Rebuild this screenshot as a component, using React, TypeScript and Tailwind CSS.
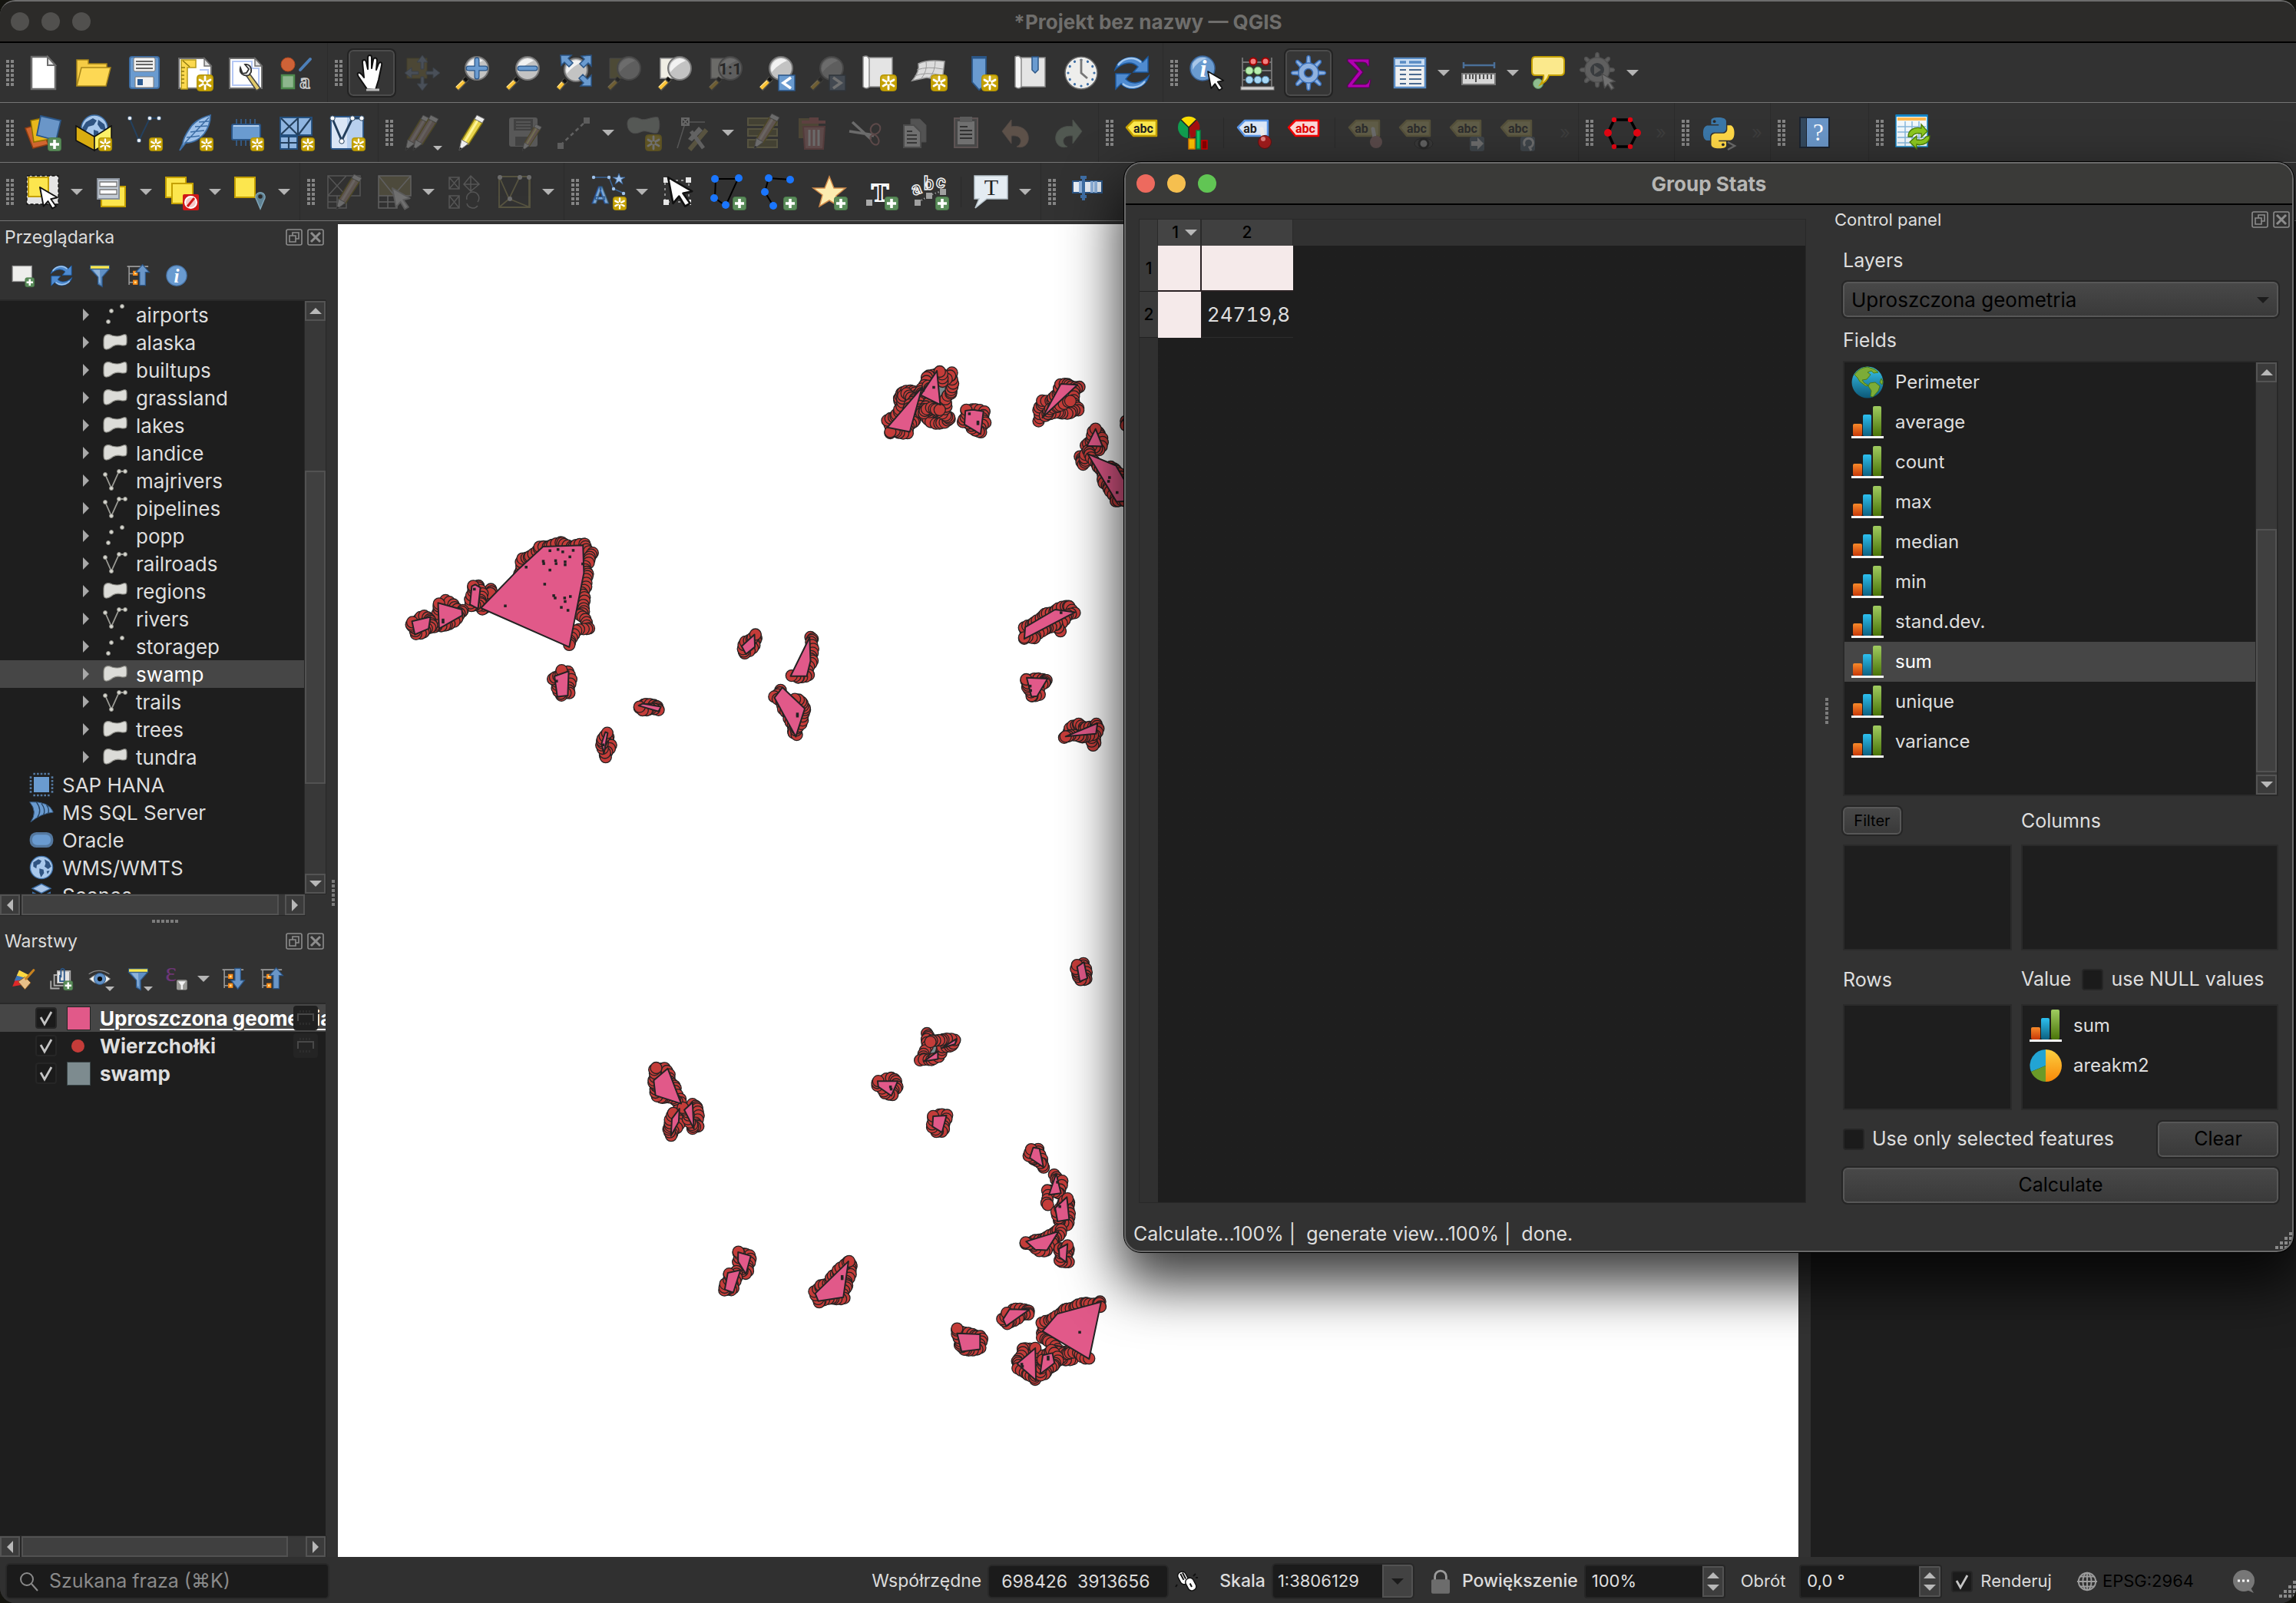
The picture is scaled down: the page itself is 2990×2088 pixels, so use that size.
import type { ReactNode } from "react";

/* ---------------------------------------------------------------- helpers */

function Ico({ children, dim, className = "size-12" }: { children: ReactNode; dim?: boolean; className?: string }) {
  return (
    <svg viewBox="0 0 48 48" aria-hidden="true" className={`${className} shrink-0 overflow-visible ${dim ? "opacity-30" : ""}`}>
      {children}
    </svg>
  );
}

/* Yellow "new" badge */
function NewBadge({ s = 22 }: { s?: number }) {
  return (
    <g transform={`translate(${48 - s} ${48 - s}) scale(${s / 22})`}>
      <rect x="0.5" y="0.5" width="21" height="21" rx="4" fill="#c4a000" stroke="#b29300" />
      <rect x="2" y="2" width="18" height="8" rx="3" fill="#d9b92e" opacity=".6" />
      <path d="M11 3v16M4 7l14 8M4 15l14-8" stroke="#fff" strokeWidth="2.8" strokeLinecap="round" />
      <circle cx="11" cy="11" r="2" fill="#c4a000" />
    </g>
  );
}

function PlusBadge({ s = 18 }: { s?: number }) {
  return (
    <g transform={`translate(${48 - s} ${48 - s}) scale(${s / 18})`}>
      <rect x="0.5" y="0.5" width="17" height="17" rx="3" fill="#5a8c5a" stroke="#4a7a4a" />
      <path d="M9 3v12M3 9h12" stroke="#fff" strokeWidth="3.6" />
    </g>
  );
}

function Lens({ cx = 29, cy = 18, r = 15, handle = "#fcc436" }: { cx?: number; cy?: number; r?: number; handle?: string }) {
  return (
    <>
      <path d={`M${cx - 13} ${cy + 13}L3 45`} stroke="#55534a" strokeWidth="7" />
      <path d={`M${cx - 13} ${cy + 13}l-3 3`} stroke="#111" strokeWidth="5" />
      <path d={`M${cx - 17} ${cy + 17}L3 44`} stroke={handle} strokeWidth="5" />
      <path d={`M${cx - 18} ${cy + 16}L2 42`} stroke="#fff3c8" strokeWidth="1" />
      <circle cx={cx} cy={cy} r={r} fill="#c3c3c3" stroke="#777" strokeWidth="2" />
      <path d={`M${cx - 12} ${cy + 5}A13 13 0 0 1 ${cx + 8} ${cy - 10}Q${cx - 4} ${cy - 5} ${cx - 12} ${cy + 5}z`} fill="#f2f2f2" />
    </>
  );
}

function Cursor({ x, y, s = 1, fill = "#fff", stroke = "#111" }: { x: number; y: number; s?: number; fill?: string; stroke?: string }) {
  return (
    <path
      transform={`translate(${x} ${y}) scale(${s})`}
      d="M0 0L24 14L15 16L22 26L17 29L11 19L5 26z"
      fill={fill}
      stroke={stroke}
      strokeWidth="2"
      strokeLinejoin="round"
    />
  );
}

function Tag({ text, fill, stroke, ink }: { text: string; fill: string; stroke: string; ink: string }) {
  return (
    <>
      <path d="M3 17L12 8h30v20H12z" fill={fill} stroke={stroke} strokeWidth="2.5" strokeLinejoin="round" />
      <text x={text === "ab" ? 19 : 25} y="24" fontSize="16" fontWeight="700" fontFamily="Roboto, sans-serif" textAnchor="middle" fill={ink}>
        {text}
      </text>
    </>
  );
}

function Refresh() {
  return (
    <>
      <path d="M2 20C6 4 28 -2 38 10l7-7v20H26l6-7C24 8 12 10 2 20z" fill="#4f8bd0" stroke="#1d5a9f" strokeWidth="1.5" />
      <path d="M46 28C42 44 20 50 10 38l-7 7V25h19l-6 7c8 8 20 6 30-4z" fill="#4f8bd0" stroke="#1d5a9f" strokeWidth="1.5" />
      <path d="M6 14C12 5 26 1 36 10M41 35c-6 8-20 11-29 3" fill="none" stroke="#a4c8ee" strokeWidth="2.5" />
    </>
  );
}

function Pencil({ x = 0, fill = "#e8d44c", light = "#fff59a" }: { x?: number; fill?: string; light?: string }) {
  return (
    <g transform={`translate(${x} 0)`}>
      <path d="M26 6l10 5L18 39l-9-5z" fill={fill} stroke="#8a7a10" strokeWidth="1.5" />
      <path d="M30 8L13 36" stroke={light} strokeWidth="3" />
      <path d="M26 6l3-5 10 5-3 5z" fill="#eee" stroke="#777" />
      <path d="M9 33l9 5-12 9z" fill="#eee" stroke="#777" />
      <path d="M7 43l3 1-4 3z" fill="#222" />
    </g>
  );
}

function Gear({ fill, stroke, inner, r = 13 }: { fill: string; stroke: string; inner: string; r?: number }) {
  return (
    <>
      {[0, 45, 90, 135, 180, 225, 270, 315].map((a) => (
        <path key={a} transform={`rotate(${a} 24 24)`} d="M21 14L22 3Q24 0 26 3L27 14z" fill={fill} stroke={stroke} strokeWidth="1.5" />
      ))}
      <circle cx="24" cy="24" r={r} fill={fill} stroke={stroke} strokeWidth="1.5" />
      <circle cx="24" cy="24" r={r - 4} fill={fill} />
      <circle cx="24" cy="24" r="5.5" fill={inner} stroke={stroke} strokeWidth="1.5" />
    </>
  );
}

function Page({ inner = true }: { inner?: boolean }) {
  return (
    <>
      <path d="M3 5h33l9 10v29H3z" fill="#fff" stroke="#6d6d6d" strokeWidth="2" />
      {inner && <path d="M7 9h25v9h9v22H7z" fill="none" stroke="#b5c8f5" strokeWidth="2" />}
      <path d="M36 5v10h9z" fill="#ddd" stroke="#6d6d6d" strokeWidth="1.5" />
    </>
  );
}

function Expand({ up }: { up?: boolean }) {
  return (
    <>
      <path d="M1 5h44M5 5v38M5 20h8M5 38h8" stroke="#9a9a9a" strokeWidth="2.5" fill="none" />
      <rect x="13" y="14" width="10" height="10" fill="#ff8c1a" />
      <rect x="13" y="33" width="10" height="10" fill="#ff8c1a" />
      <rect x="16" y="17" width="4" height="4" fill="#ffe08a" />
      <rect x="16" y="36" width="4" height="4" fill="#ffe08a" />
      <path d={up ? "M33 1L47 17h-8v27H27V17h-8z" : "M27 2h12v25h8L33 45L19 27h8z"} fill="#6a96c8" stroke="#2b5687" strokeWidth="2" />
    </>
  );
}

function Funnel() {
  return (
    <>
      <path d="M4 10h40L29 27v20l-9-5V27z" fill="#5f8fc4" stroke="#2b5687" strokeWidth="2" />
      <path d="M10 12h14l1 28-3-2V27z" fill="#a3c2e4" opacity=".7" />
      <rect x="4" y="3" width="40" height="7" fill="#fce94f" stroke="#2b5687" strokeWidth="1.5" />
    </>
  );
}

function GlobeMini() {
  return (
    <>
      <circle cx="24" cy="24" r="22" fill="#a8c8ec" stroke="#3d6ea5" strokeWidth="2" />
      <path d="M8 14l10-6 6 3-3 6-6 2-1 7-6-4zM20 26l8 2 1 7-6 8-3-9zM30 8l9 5 4 9-6 5-7-5 2-6zM34 31l6-1-4 7z" fill="#2f5482" />
    </>
  );
}

/* ------------------------------------------------------------- icon table */

const ZOOM_BOX = <path d="M4 5h26v26H4z" fill="#f0eee4" stroke="#999" strokeWidth="1.5" />;

const ICONS: Record<string, ReactNode> = {
  new: (
    <>
      <path d="M9 3h21l10 11v31H9z" fill="#fff" stroke="#6d6d6d" strokeWidth="2.5" />
      <path d="M30 3v11h10z" fill="#e8e8e8" stroke="#6d6d6d" strokeWidth="2" />
    </>
  ),
  open: (
    <>
      <path d="M2 41V7h15v5h24v8" fill="#f5cc45" stroke="#a8861a" strokeWidth="1.5" />
      <path d="M2 41L8 17h38l-6 24z" fill="#fdd854" stroke="#a8861a" strokeWidth="1.5" />
    </>
  ),
  save: (
    <>
      <rect x="5" y="3" width="38" height="41" rx="3" fill="#6a9bd0" stroke="#3f6fa6" strokeWidth="2" />
      <rect x="10" y="4" width="28" height="18" rx="2" fill="#f2f2f2" stroke="#777" />
      <path d="M13 9h22M13 13h22M13 18h22" stroke="#666" strokeWidth="2" />
      <rect x="12" y="29" width="24" height="14" rx="1" fill="#f2f2f2" stroke="#777" />
      <rect x="15" y="32" width="7" height="8" fill="#2d5c92" />
    </>
  ),
  newLayout: (
    <>
      <Page inner={false} />
      <path d="M6 7h19v10H14v28H6z" fill="#fcd94f" stroke="#b59a1a" strokeWidth="1.5" />
      <path d="M6 22h4M6 27h4M6 32h4M6 37h4M6 17h5M8 8l9 8" stroke="#8f7a10" strokeWidth="1.5" />
      <path d="M30 20h11v8" stroke="#b5c8f5" strokeWidth="2" fill="none" />
      <NewBadge />
    </>
  ),
  layouts: (
    <>
      <Page />
      <path d="M29 25l14 19-5 3-13-19z" fill="#e0c96a" stroke="#444" strokeWidth="1.5" />
      <path d="M17 17c-2 7 4 12 11 10l3-4c1-6-2-11-8-10l5 6-3 5-5 1z" fill="#f4f4f4" stroke="#333" strokeWidth="1.8" />
    </>
  ),
  style: (
    <>
      <circle cx="13" cy="13" r="9" fill="#cf6237" stroke="#b3481e" />
      <path d="M29 20L42 6" stroke="#4d7fb8" strokeWidth="4" strokeLinecap="round" />
      <rect x="5" y="27" width="16" height="17" fill="#8db68d" stroke="#4e8a4e" strokeWidth="2.5" />
      <text x="35" y="44" textAnchor="middle" fontFamily="Liberation Serif, serif" fontWeight="700" fontSize="27" fill="#3c3c3c" stroke="#ccc" strokeWidth="1.5">a</text>
    </>
  ),
  pan: (
    <>
      <path d="M18 45L7 29C4 24 7 22 11 26l3 4L12 10c0-4 4-4 5 0l2 9V4c0-4 5-4 5 0v14l2-11c1-4 5-3 5 1l-1 12 3-8c2-3 5-2 4 2l-4 19-4 13z" fill="#fff" stroke="#111" strokeWidth="2" strokeLinejoin="round" />
      <path d="M17 46h17" stroke="#bbb" strokeWidth="3" />
    </>
  ),
  panSel: (
    <>
      <rect x="4" y="5" width="26" height="26" fill="#8a7a3e" stroke="#6a5a1e" />
      <path d="M24 1l7 9h-5v9h-4v-9h-5zM24 47l7-9h-5v-9h-4v9h-5zM1 24l9-7v5h9v4h-9v5zM47 24l-9-7v5h-9v4h9v5z" fill="#7e94b0" stroke="#4d6078" />
    </>
  ),
  zoomIn: (
    <>
      <Lens />
      <path d="M29 7v22M18 18h22" stroke="#2b5687" strokeWidth="7" strokeLinecap="round" />
      <path d="M29 7v22M18 18h22" stroke="#6a9bd0" strokeWidth="4.5" strokeLinecap="round" />
    </>
  ),
  zoomOut: (
    <>
      <Lens />
      <path d="M19 18h20" stroke="#2b5687" strokeWidth="7" strokeLinecap="round" />
      <path d="M19 18h20" stroke="#6a9bd0" strokeWidth="4.5" strokeLinecap="round" />
    </>
  ),
  zoomFull: (
    <>
      <Lens cx={26} cy={20} />
      <path d="M6 1h14l-4 4 6 6-5 5-6-6-4 4zM46 1v14l-4-4-6 6-5-5 6-6-4-4zM46 41H32l4-4-6-6 5-5 6 6 5-5z" fill="#6a9bd0" stroke="#2b5687" strokeWidth="1.5" />
    </>
  ),
  zoomSel: (
    <>
      <path d="M4 5h26v26H4z" fill="#8c8440" stroke="#777" />
      <Lens />
    </>
  ),
  zoomLayer: (
    <>
      {ZOOM_BOX}
      <Lens />
    </>
  ),
  zoomNative: (
    <>
      {ZOOM_BOX}
      <Lens />
      <text x="29" y="26" textAnchor="middle" fontFamily="Roboto, sans-serif" fontWeight="700" fontSize="21" fill="#111">1:1</text>
    </>
  ),
  zoomLast: (
    <>
      <Lens />
      <rect x="26" y="27" width="21" height="20" fill="#6a9bd0" stroke="#2b5687" strokeWidth="1.5" />
      <path d="M42 30l-10 7 10 7" fill="none" stroke="#fff" strokeWidth="3.5" />
    </>
  ),
  zoomNext: (
    <>
      <Lens />
      <rect x="26" y="27" width="21" height="20" fill="#6a8098" stroke="#2b3c50" strokeWidth="1.5" />
      <path d="M31 30l10 7-10 7" fill="none" stroke="#fff" strokeWidth="3.5" />
    </>
  ),
  newMap: (
    <>
      <path d="M9 4h33v38H9z" fill="#e4e4e4" stroke="#8a8a8a" strokeWidth="1.5" />
      <path d="M4 3q6-3 8 3v36q-3 4-8 0z" fill="#f6f6f6" stroke="#8a8a8a" strokeWidth="1.5" />
      <NewBadge />
    </>
  ),
  new3d: (
    <>
      <path d="M10 12q12-6 34-3l-3 25-20-4-19 4q10-12 8-22z" fill="#dcdcdc" stroke="#9a9a9a" strokeWidth="1.5" />
      <path d="M8 20q14-5 34-1M5 28q14-6 36-1M20 9q2 12-6 22M32 8q0 14-8 23" fill="none" stroke="#9a9a9a" />
      <NewBadge />
    </>
  ),
  newBookmark: (
    <>
      <path d="M14 3h18v37l-9 6-9-10z" fill="#6a9bd0" stroke="#2b5687" strokeWidth="1.8" />
      <path d="M14 4h18" stroke="#2b5687" strokeWidth="3" />
      <NewBadge />
    </>
  ),
  bookmarks: (
    <>
      <path d="M9 4h34v38H9z" fill="#e4e4e4" stroke="#8a8a8a" strokeWidth="1.5" />
      <path d="M4 3q6-3 8 3v36q-3 4-8 0z" fill="#f6f6f6" stroke="#8a8a8a" strokeWidth="1.5" />
      <path d="M26 3h8v17l-4 4-4-4z" fill="#6a9bd0" stroke="#2b5687" strokeWidth="1.5" />
    </>
  ),
  clock: (
    <>
      <circle cx="24" cy="24" r="21" fill="#eeeeec" stroke="#666" strokeWidth="1.5" />
      {[0, 30, 60, 90, 120, 150, 180, 210, 240, 270, 300, 330].map((a) => (
        <circle key={a} cx="24" cy="7" r="1.6" fill="#3d6ea5" transform={`rotate(${a} 24 24)`} />
      ))}
      <path d="M24 6v18l8 7" fill="none" stroke="#777" strokeWidth="2.8" />
    </>
  ),
  refresh: <Refresh />,
  identify: (
    <>
      <circle cx="18" cy="18" r="16" fill="#6a9bd0" stroke="#3a6498" strokeWidth="1.5" />
      <path d="M5 12Q12 1 24 5 12 8 5 20z" fill="#a8c6e8" />
      <text x="19" y="29" textAnchor="middle" fontFamily="Liberation Serif, serif" fontStyle="italic" fontWeight="700" fontSize="32" fill="#fff">i</text>
      <Cursor x={25} y={22} s={0.85} />
    </>
  ),
  abacus: (
    <>
      <path d="M4 4v38M42 4v38M4 10h38M4 21h38M4 33h38" stroke="#777" strokeWidth="1.8" fill="none" />
      <rect x="2" y="42" width="43" height="4" fill="#d0d0d0" stroke="#888" />
      {[18, 34].map((x) => <circle key={x} cx={x} cy="9" r="4.5" fill="#f28080" stroke="#a40000" strokeWidth="2" />)}
      {[13, 24].map((x) => <circle key={x} cx={x} cy="21" r="5" fill="#b8eeb0" stroke="#5a9a50" />)}
      {[13, 24, 34].map((x) => <circle key={x} cx={x} cy="33" r="4.8" fill="#a8d8f4" stroke="#4a80a8" />)}
    </>
  ),
  gear: <Gear fill="#8fb2e0" stroke="#3a6fb8" inner="#363636" />,
  sigma: <path d="M9 6h28v9h-2q-1-5-6-5H18l11 13-13 16h15q5 0 6-6h2l-2 10H9v-3l14-18L9 9z" fill="#b000b0" stroke="#5a005a" strokeWidth="1.2" />,
  table: (
    <>
      <rect x="4" y="5" width="40" height="38" fill="#f0f0f0" stroke="#5a8cc4" strokeWidth="2.5" />
      <rect x="5" y="6" width="38" height="8" fill="#c8dcf2" />
      <path d="M4 15h40" stroke="#5a8cc4" strokeWidth="2" />
      <path d="M11 10h8M23 10h16" stroke="#5a8cc4" strokeWidth="3.5" />
      <path d="M11 20h8M23 20h16M11 26h8M23 26h16M11 32h8M23 32h16M11 38h8M23 38h16" stroke="#4a6a90" strokeWidth="2" />
    </>
  ),
  ruler: (
    <>
      <path d="M4 14h40M4 10v8M44 10v8" stroke="#4a6f98" strokeWidth="2.5" />
      <rect x="2" y="25" width="43" height="14" fill="#d6d6d6" stroke="#777" strokeWidth="2" />
      <path d="M7 26v6M12 26v6M16 26v6M20 26v10M25 26v6M30 26v6M35 26v6M40 26v6" stroke="#444" strokeWidth="1.8" />
    </>
  ),
  tip: (
    <>
      <circle cx="11" cy="38" r="6.5" fill="#8fbc8f" stroke="#5a8c5a" />
      <path d="M7 3h33q5 0 5 5v14q0 5-5 5H25q-2 8-11 12 5-7 4-12H7q-4 0-4-5V8q0-5 4-5z" fill="#fbe98c" stroke="#c4a000" strokeWidth="2" />
    </>
  ),
  action: (
    <>
      <g transform="translate(-2 -4)"><Gear fill="#c8c8c8" stroke="#999" inner="#444" r={16} /></g>
      <circle cx="22" cy="20" r="9" fill="#4a545e" />
      <path d="M18 14l9 6-9 6z" fill="#bbb" />
      <Cursor x={28} y={25} s={0.72} fill="#fff" stroke="#888" />
    </>
  ),
  addLayer: (
    <>
      <path d="M1 18l18-5 12 26-20 5z" fill="#d0662f" stroke="#8f3d12" strokeWidth="1.5" />
      <path d="M8 8l20-4 6 28-22 4z" fill="#e8b81c" stroke="#8f6f00" strokeWidth="1.5" />
      <path d="M21 2l26 6-6 26-25-7z" fill="#6a96c8" stroke="#2b5687" strokeWidth="1.8" />
      <PlusBadge />
    </>
  ),
  geopackage: (
    <>
      <circle cx="25" cy="18" r="17" fill="#a8c8ec" stroke="#3d6ea5" strokeWidth="1.5" />
      <path d="M14 10l9-5 5 3-4 6-7 2-4 8-4-6zM30 7l8 6 2 8-7-2-4-6zM24 20l6 2 1 6-7 4z" fill="#2f5482" />
      <path d="M1 15l24 14v18L1 34z" fill="#d9ad10" stroke="#111" strokeWidth="1.5" />
      <path d="M47 15L25 29v18l22-13z" fill="#fcf168" stroke="#111" strokeWidth="1.5" />
      <NewBadge s={18} />
    </>
  ),
  shapefile: (
    <>
      <path d="M5 6l12 28L31 5h11" fill="none" stroke="#24405e" strokeWidth="2" />
      {[[5, 5], [31, 5], [43, 5], [17, 34]].map(([x, y]) => <circle key={`${x}-${y}`} cx={x} cy={y} r="2.8" fill="#e8eef4" stroke="#24405e" strokeWidth=".8" />)}
      <NewBadge s={18} />
    </>
  ),
  spatialite: (
    <>
      <path d="M44 1Q24 6 16 20 9 30 8 38L4 47 12 37q14 0 24-12Q44 14 44 1z" fill="#9fc2ea" stroke="#3d6ea5" strokeWidth="1.8" />
      <path d="M42 4L10 38M40 15l-16 1M36 21l-18 2M30 28l-17 2M42 9l-13 1" stroke="#3d6ea5" strokeWidth="1.5" fill="none" />
      <NewBadge s={18} />
    </>
  ),
  scratch: (
    <>
      <path d="M12 6v8M18 6v8M24 6v8M30 6v8M36 6v8M12 34v7M18 34v7M24 34v7M30 34v7" stroke="#34587f" strokeWidth="2" />
      <rect x="6" y="13" width="37" height="20" rx="2" fill="#6a9bd0" stroke="#2b5687" strokeWidth="2" />
      <path d="M8 15h33" stroke="#b5d0ee" strokeWidth="2" />
      <NewBadge s={18} />
    </>
  ),
  mesh: (
    <>
      <path d="M3 4h41v23H3zM3 29h22v16H3z" fill="#8fb5e0" stroke="#24507f" strokeWidth="1.8" />
      <path d="M26 4v23M4 5l22 22M26 5L4 26M43 5L27 26M14 29v16M3 37h22" stroke="#24405e" strokeWidth="2.2" fill="none" />
      <NewBadge s={18} />
    </>
  ),
  virtual: (
    <>
      <rect x="3" y="3" width="42" height="42" rx="3" fill="#b8d0ee" stroke="#2b5687" strokeWidth="1.8" />
      <rect x="4" y="4" width="20" height="40" fill="#e8effa" opacity=".7" />
      <path d="M5 6l12 28L31 5h13" fill="none" stroke="#24405e" strokeWidth="3" />
      {[[5, 5], [31, 5], [43, 5], [17, 35]].map(([x, y]) => <circle key={`${x}-${y}`} cx={x} cy={y} r="3.2" fill="#fff" stroke="#24405e" strokeWidth="1" />)}
      <NewBadge s={18} />
    </>
  ),
  edits: (
    <>
      <Pencil x={-4} fill="#b89a90" light="#d8c8c0" />
      <Pencil x={6} fill="#b89a90" light="#d8c8c0" />
    </>
  ),
  pencil: <Pencil />,
  saveEdits: (
    <>
      <rect x="5" y="4" width="37" height="38" rx="3" fill="#b0b0b0" />
      <rect x="11" y="6" width="25" height="15" fill="#666" />
      <path d="M14 10h19M14 14h19M14 18h19" stroke="#bbb" strokeWidth="1.5" />
      <rect x="13" y="29" width="16" height="12" fill="#666" />
      <g transform="translate(18 12) scale(.75)"><Pencil fill="#c8a090" /></g>
    </>
  ),
  digitize: (
    <>
      <path d="M6 40L41 7" stroke="#d0d0d0" strokeWidth="2.5" strokeDasharray="5 4" />
      <path d="M2 37h8v8H2zM36 4h8v8h-8z" fill="#c0c0c0" />
    </>
  ),
  addPoly: (
    <>
      <path d="M3 12C3 2 14 3 20 6S36 2 43 4c3 8 2 16-1 20-8 2-14-5-22-1S3 24 3 12z" fill="#a8b0a8" stroke="#888" />
      <NewBadge />
    </>
  ),
  vertex: (
    <>
      <path d="M2 44L12 12M16 10h22" stroke="#aaa" strokeWidth="1.5" />
      <path d="M8 5h9v9H8zM8 5l9 9M17 5l-9 9" stroke="#ddd" strokeWidth="2" fill="none" />
      <path d="M18 46L40 20" stroke="#b0a060" strokeWidth="6" />
      <path d="M20 22l16 22" stroke="#ccc" strokeWidth="5" />
      <path d="M16 32L30 16l5 5-14 14z" fill="#d0d0d0" />
    </>
  ),
  multiEdit: (
    <>
      <path d="M4 5h38v9H4zM4 19h38v9H4zM4 33h38v10H4z" fill="#6c6438" stroke="#aaa060" strokeWidth="2" />
      <g transform="translate(6 -2)"><Pencil fill="#c8a898" light="#eadad0" /></g>
    </>
  ),
  trash: (
    <>
      <path d="M4 5h26v26H4z" fill="#8c7440" />
      <path d="M8 10h31M18 6h12" stroke="#c06060" strokeWidth="4" />
      <path d="M10 16h28l-2 29H12z" fill="#c08080" stroke="#a05050" strokeWidth="2" />
      <path d="M18 20v21M24 20v21M30 20v21" stroke="#eee" strokeWidth="3" />
    </>
  ),
  cut: (
    <>
      <path d="M4 22l26 4 6 2M8 10l24 22" stroke="#eee" strokeWidth="3.5" />
      <ellipse cx="38" cy="19" rx="6" ry="7" fill="none" stroke="#c08080" strokeWidth="2" transform="rotate(35 38 19)" />
      <ellipse cx="37" cy="33" rx="5" ry="7" fill="none" stroke="#c08080" strokeWidth="2" transform="rotate(-30 37 33)" />
    </>
  ),
  copy: (
    <>
      <path d="M18 6h12l8 8v22H18z" fill="#a0a0a0" stroke="#888" />
      <path d="M9 14h13l9 9v20H9z" fill="#fff" stroke="#888" strokeWidth="2" />
      <path d="M13 22h7M13 27h13M13 32h13M13 37h13" stroke="#444" strokeWidth="1.8" />
    </>
  ),
  paste: (
    <>
      <path d="M9 5h30v38H9z" fill="#777" stroke="#c0a0a0" strokeWidth="2" />
      <path d="M13 9h22v30H13z" fill="#fff" />
      <path d="M16 3h16v7H16z" fill="#bbb" />
      <path d="M16 16h10M16 21h16M16 26h16M16 31h16" stroke="#333" strokeWidth="1.8" />
    </>
  ),
  undo: <path d="M5 22L17 7v9c16-3 24 8 22 18-2 8-9 10-15 8 8-3 8-16-7-14v10z" fill="#c09880" stroke="#a08070" />,
  redo: <path d="M43 22L31 7v9C15 13 7 24 9 34c2 8 9 10 15 8-8-3-8-16 7-14v10z" fill="#98b098" stroke="#809080" />,
  label: <Tag text="abc" fill="#fce94f" stroke="#c4a000" ink="#222" />,
  diagram: (
    <>
      <circle cx="18" cy="17" r="14" fill="#10a050" />
      <path d="M18 17L8 7A14 14 0 0 1 28 7z" fill="#fcdc00" />
      <path d="M18 17L28 7A14 14 0 0 1 20 31z" fill="#a41010" />
      <path d="M18 17L8 7M18 17L28 7M18 17v14" stroke="#222" strokeWidth="1.5" />
      <rect x="18" y="32" width="8" height="13" fill="#fcc000" stroke="#e08000" strokeWidth="1.5" />
      <rect x="28" y="21" width="5" height="24" fill="#10c060" stroke="#0a8040" strokeWidth="1.5" />
      <rect x="35" y="34" width="7" height="11" fill="#800" stroke="#d00000" strokeWidth="1.5" />
    </>
  ),
  pinLabel: (
    <>
      <Tag text="ab" fill="#dce8f8" stroke="#5a96e6" ink="#222" />
      <path d="M34 19l3 16" stroke="#eee" strokeWidth="5" strokeLinecap="round" />
      <circle cx="38" cy="36" r="8.5" fill="#a01c1c" stroke="#601010" />
      <circle cx="36" cy="32" r="3" fill="#e08080" />
    </>
  ),
  redLabel: <Tag text="abc" fill="#fcd8d8" stroke="#f00000" ink="#e00000" />,
  pinDim: (
    <>
      <Tag text="ab" fill="#c8bc78" stroke="#a89850" ink="#222" />
      <path d="M34 19l3 16" stroke="#eee" strokeWidth="5" strokeLinecap="round" />
      <circle cx="38" cy="36" r="8" fill="#b08080" />
    </>
  ),
  showDim: (
    <>
      <Tag text="abc" fill="#c8bc78" stroke="#a89850" ink="#222" />
      <ellipse cx="34" cy="38" rx="12" ry="7" fill="#444" stroke="#111" />
      <circle cx="34" cy="38" r="6" fill="#ccc" stroke="#111" strokeWidth="3" />
    </>
  ),
  moveDim: (
    <>
      <Tag text="abc" fill="#c8bc78" stroke="#a89850" ink="#222" />
      <rect x="28" y="29" width="19" height="19" rx="3" fill="#5c7080" />
      <path d="M30 35h8v-5l8 8-8 8v-5h-8z" fill="#eee" />
    </>
  ),
  rotateDim: (
    <>
      <Tag text="abc" fill="#c8bc78" stroke="#a89850" ink="#222" />
      <rect x="28" y="29" width="19" height="19" rx="3" fill="#5c7080" />
      <path d="M34 41a6 6 0 1 1 6 2l2 4" fill="none" stroke="#eee" strokeWidth="3" />
    </>
  ),
  polygon: (
    <>
      <path d="M13 7h21l9 17-9 18H13L5 24z" fill="none" stroke="#000" strokeWidth="3.5" />
      {[[13, 7], [34, 7], [13, 42], [34, 42]].map(([x, y]) => <circle key={`${x}-${y}`} cx={x} cy={y} r="3.2" fill="#e30613" />)}
      <circle cx="5" cy="24" r="5" fill="#e30613" />
      <circle cx="43" cy="24" r="5" fill="#e30613" />
    </>
  ),
  python: (
    <>
      <g transform="translate(4 4) scale(1.68)">
        <path fill="#3b77a8" d="M14.25.18l.9.2.73.26.59.3.45.32.34.34.25.34.16.33.1.3.04.26.02.2-.01.13V8.5l-.05.63-.13.55-.21.46-.26.38-.3.31-.33.25-.35.19-.35.14-.33.1-.3.07-.26.04-.21.02H8.77l-.69.05-.59.14-.5.22-.41.27-.33.32-.27.35-.2.36-.15.37-.1.35-.07.32-.04.27-.02.21v3.06H3.17l-.21-.03-.28-.07-.32-.12-.35-.18-.36-.26-.36-.36-.35-.46-.32-.59-.28-.73-.21-.88-.14-1.05-.05-1.23.06-1.22.16-1.04.24-.87.32-.71.36-.57.4-.44.42-.33.42-.24.4-.16.36-.1.32-.05.24-.01h.16l.06.01h8.16v-.83H6.18l-.01-2.75-.02-.37.05-.34.11-.31.17-.28.25-.26.31-.23.38-.2.44-.18.51-.15.58-.12.64-.1.71-.06.77-.04.84-.02 1.27.05z" />
        <path fill="#ffd847" d="M21.1 6.11l.28.06.32.12.35.18.36.27.36.35.35.47.32.59.28.73.21.88.14 1.04.05 1.23-.06 1.23-.16 1.04-.24.86-.32.71-.36.57-.4.45-.42.33-.42.24-.4.16-.36.09-.32.05-.24.02-.16-.01h-8.22v.82h5.84l.01 2.76.02.36-.05.34-.11.31-.17.29-.25.25-.31.24-.38.2-.44.17-.51.15-.58.13-.64.09-.71.07-.77.04-.84.01-1.27-.04-1.07-.14-.9-.2-.73-.25-.59-.3-.45-.33-.34-.34-.25-.34-.16-.33-.1-.3-.04-.25-.02-.2.01-.13v-5.34l.05-.64.13-.54.21-.46.26-.38.3-.32.33-.24.35-.2.35-.14.33-.1.3-.06.26-.04.21-.02.13-.01h5.84l.69-.05.59-.14.5-.21.41-.28.33-.32.27-.35.2-.36.15-.36.1-.35.07-.32.04-.28.02-.21V6.07h2.09z" />
        <circle cx="8.7" cy="3.1" r="1.1" fill="#2b2b2b" />
        <circle cx="15.4" cy="21" r="1.1" fill="#2b2b2b" />
      </g>
      <path d="M36 36l9 5-9 5" fill="none" stroke="#6a6a6a" strokeWidth="2.5" />
    </>
  ),
  help: (
    <>
      <rect x="4" y="3" width="40" height="41" fill="#1c2430" />
      <rect x="6" y="5" width="7" height="37" fill="#34495e" />
      <rect x="14" y="5" width="28" height="37" fill="#6a96c8" />
      <text x="29" y="34" textAnchor="middle" fontFamily="Liberation Serif, serif" fontSize="31" fill="#fff">?</text>
    </>
  ),
  tableRefresh: (
    <>
      <rect x="2" y="1" width="41" height="41" fill="#f2f8fc" stroke="#1484c4" strokeWidth="1.5" />
      <rect x="2" y="0" width="41" height="3" fill="#1484c4" />
      <rect x="4" y="4" width="37" height="4" fill="#ffb74d" />
      <path d="M4 16h37M4 23h37M4 30h37M4 37h37M14 9v32M23 9v32M32 9v32" stroke="#88b8dc" strokeWidth="1.5" />
      <path d="M18 29c0-9 8-13 17-11v-5l8 9-8 8v-5c-6-1-10 0-12 4zM46 28c0 9-8 13-17 11v6l-9-9 9-8v5c6 1 10 0 12-4z" fill="#8cc820" stroke="#4a7c08" strokeWidth="1.3" />
    </>
  ),
  select: (
    <>
      <rect x="3" y="3" width="41" height="37" fill="#e4e4e4" stroke="#111" strokeWidth="1.3" strokeDasharray="4 2.5" />
      <rect x="5" y="5" width="26" height="25" fill="#fce64e" stroke="#c4a000" strokeWidth="2" />
      <Cursor x={20} y={18} s={0.95} />
    </>
  ),
  selectForm: (
    <>
      <rect x="10" y="17" width="31" height="26" fill="#fce64e" stroke="#c4a000" strokeWidth="2" />
      <rect x="5" y="7" width="28" height="26" fill="#c4ccd6" stroke="#8a929c" strokeWidth="2" />
      <path d="M8 11h22v6H8zM8 21h22v6H8z" fill="#fff" stroke="#777" strokeWidth="1.3" />
    </>
  ),
  deselect: (
    <>
      <rect x="4" y="5" width="26" height="26" fill="#fce64e" stroke="#c4a000" strokeWidth="2" />
      <rect x="12" y="13" width="27" height="26" fill="#fce64e" stroke="#c4a000" strokeWidth="2" />
      <rect x="26" y="27" width="21" height="21" rx="2" fill="#d01818" />
      <circle cx="36.5" cy="37.5" r="7.5" fill="#f4c8c8" stroke="#fff" strokeWidth="2" />
      <path d="M32 43l9-11" stroke="#d01818" strokeWidth="3" />
    </>
  ),
  selectLoc: (
    <>
      <rect x="4" y="5" width="26" height="26" fill="#fce64e" stroke="#c4a000" strokeWidth="2" />
      <path d="M37 46l-5-12a6 6 0 1 1 10 0z" fill="#5f8294" stroke="#7fa5b8" strokeWidth="1.5" />
      <circle cx="37" cy="30" r="2.8" fill="#2b2b2b" />
    </>
  ),
  meshEdit: (
    <>
      <path d="M3 3h42v26H3zM3 29h24v16H3zM3 3l24 26M27 3L3 29M15 29v16M3 37h24" stroke="#aaa" strokeWidth="1.5" fill="none" />
      <g transform="translate(8 0)"><Pencil fill="#c8a898" light="#eadad0" /></g>
    </>
  ),
  meshSel: (
    <>
      <path d="M3 3h42v26H3z" fill="#b8a868" opacity=".7" />
      <path d="M3 3h42v26H3zM3 29h24v16H3zM3 3l20 25L45 3M15 29v16M3 37h24" stroke="#ccc" strokeWidth="1.5" fill="none" />
      <Cursor x={21} y={19} s={0.95} fill="#fff" stroke="#bbb" />
    </>
  ),
  meshTrans: (
    <path d="M5 5h13v15H5zM5 5l13 15M18 5L5 20M5 29h13v16H5zM5 29l13 16M18 29L5 45M33 3l11 11-11 9-9-9zM33 3v20M24 14h20M28 34a8 8 0 1 1 14 3M42 42a8 8 0 0 1-14-3" stroke="#aaa" strokeWidth="1.5" fill="none" />
  ),
  meshForce: (
    <>
      <path d="M4 4h40v40H4zM4 4l13 29M31 4L17 33M43 4v40M4 44l13-11 27 11" stroke="#aaa060" strokeWidth="1.8" fill="none" />
      {[[5, 5], [31, 5], [43, 5], [18, 33]].map(([x, y]) => <circle key={`${x}-${y}`} cx={x} cy={y} r="3" fill="#eee" />)}
    </>
  ),
  annotLayer: (
    <>
      <path d="M5 5h20l6 15 14 6" fill="none" stroke="#3a6498" strokeWidth="1.5" />
      {[[5, 5], [25, 5], [31, 20], [44, 26]].map(([x, y]) => <circle key={`${x}-${y}`} cx={x} cy={y} r="2.2" fill="#9fc2ea" />)}
      <path d="M38 0l2 5h6l-5 3 2 6-5-4-5 4 2-6-5-3h6z" fill="#9fc2ea" stroke="#3a6498" />
      <text x="14" y="39" textAnchor="middle" fontFamily="Roboto, sans-serif" fontWeight="700" fontSize="32" fill="#7ba6d8" stroke="#2b5687" strokeWidth="1.2">A</text>
      <NewBadge s={18} />
    </>
  ),
  annotSel: (
    <>
      <path d="M8 9h31v28H8z" fill="none" stroke="#999" strokeWidth="1.8" strokeDasharray="3 4" />
      <path d="M6 5h7v7H6zM35 5h7v7h-7zM6 34h7v7H6zM35 34h7v7h-7z" fill="#e8e8e8" />
      <Cursor x={12} y={5} s={1.3} />
    </>
  ),
  annotPoly: (
    <>
      <path d="M8 7h29L21 42 7 32z" fill="none" stroke="#000" strokeWidth="2" />
      {[[7, 7], [38, 6], [6, 32], [21, 41]].map(([x, y]) => <circle key={`${x}-${y}`} cx={x} cy={y} r="5" fill="#1a76ff" />)}
      <PlusBadge />
    </>
  ),
  annotLine: (
    <>
      <path d="M39 8L11 6 6 24l11 18" fill="none" stroke="#000" strokeWidth="2" />
      {[[39, 8], [11, 6], [6, 24], [17, 42]].map(([x, y]) => <circle key={`${x}-${y}`} cx={x} cy={y} r="5" fill="#1a76ff" />)}
      <PlusBadge />
    </>
  ),
  annotPoint: (
    <>
      <path d="M24 4l6 15h15L33 29l4 14-13-8-13 8 4-15L3 19h15z" fill="#fcecb0" stroke="#d08a4a" strokeWidth="1.5" />
      <PlusBadge />
    </>
  ),
  annotText: (
    <>
      <text x="24" y="36" textAnchor="middle" fontFamily="Liberation Serif, serif" fontWeight="700" fontSize="34" fill="#2a2a2a" stroke="#fff" strokeWidth="1.8">T</text>
      <path d="M6 34h8v8H6z" fill="#aaa" />
      <PlusBadge />
    </>
  ),
  annotCurve: (
    <>
      <path d="M8 37L22 29 40 22" stroke="#888" strokeWidth="2" strokeDasharray="2 2" />
      <g fontFamily="Roboto, sans-serif" fontWeight="700" fontSize="23" fill="#222" stroke="#eee" strokeWidth="1.5">
        <text x="2" y="29" transform="rotate(-20 2 29)">a</text>
        <text x="15" y="21">b</text>
        <text x="30" y="17" transform="rotate(12 30 17)">c</text>
      </g>
      <path d="M3 34h8v8H3zM18 25h8v8h-8zM36 20h8v8h-8z" fill="#a0a0a0" />
      <PlusBadge />
    </>
  ),
  annotNote: (
    <>
      <path d="M2 3h43v30H18L3 45l5-12H2z" fill="#e4ecf2" stroke="#b8c4cc" strokeWidth="1.5" />
      <text x="24" y="28" textAnchor="middle" fontFamily="Liberation Serif, serif" fontSize="30" fill="#222">T</text>
    </>
  ),
  measure: (
    <>
      <rect x="8" y="10" width="38" height="15" fill="#e8eef6" stroke="#2b5687" strokeWidth="2" />
      <path d="M18 10v15M38 10v15M33 10v15" stroke="#8fb2dc" strokeWidth="4" />
      <path d="M18 5h8M18 30h8M22 5v30" stroke="#3f6fa6" strokeWidth="4" />
    </>
  ),
};

/* --------------------------------------------------------------- toolbars */

type Tool = { i?: string; name?: string; d?: boolean; dim?: boolean; on?: boolean; sep?: boolean; more?: "wide" | "slim" | "blank" };
const t = (i: string, name: string, o: Partial<Tool> = {}): Tool => ({ i, name, ...o });

const ROW1: Tool[][] = [
  [t("new", "Nowy"), t("open", "Otwórz"), t("save", "Zapisz"), t("newLayout", "Nowy wydruk"), t("layouts", "Wydruki"), t("style", "Style")],
  [
    t("pan", "Przesuń", { on: true }), t("panSel", "Przesuń do zaznaczenia", { dim: true }), t("zoomIn", "Powiększ"), t("zoomOut", "Pomniejsz"),
    t("zoomFull", "Pełny zasięg"), t("zoomSel", "Powiększ do zaznaczenia", { dim: true }), t("zoomLayer", "Powiększ do warstwy"),
    t("zoomNative", "Skala 1:1", { dim: true }), t("zoomLast", "Poprzedni widok"), t("zoomNext", "Następny widok", { dim: true }),
    t("newMap", "Nowy widok mapy"), t("new3d", "Nowy widok 3D"), t("newBookmark", "Nowa zakładka"), t("bookmarks", "Zakładki"),
    t("clock", "Czas"), t("refresh", "Odśwież"),
  ],
  [
    t("identify", "Informacje"), t("abacus", "Kalkulator pól"), t("gear", "Geoprocesing", { on: true }), t("sigma", "Statystyki"),
    t("table", "Tabela atrybutów", { d: true }), t("ruler", "Zmierz", { d: true }), t("tip", "Podpowiedzi"), t("action", "Akcje", { dim: true, d: true }),
  ],
];

const ROW2: Tool[][] = [
  [
    t("addLayer", "Źródła danych"), t("geopackage", "Nowy GeoPackage"), t("shapefile", "Nowy Shapefile"), t("spatialite", "Nowa SpatiaLite"),
    t("scratch", "Warstwa tymczasowa"), t("mesh", "Nowa warstwa mesh"), t("virtual", "Warstwa wirtualna"),
  ],
  [
    t("edits", "Bieżące edycje", { dim: true }), t("pencil", "Tryb edycji"), t("saveEdits", "Zapisz zmiany", { dim: true }),
    t("digitize", "Digitalizuj", { dim: true, d: true }), t("addPoly", "Dodaj poligon", { dim: true }), t("vertex", "Edycja wierzchołków", { dim: true, d: true }),
    t("multiEdit", "Zmień atrybuty", { dim: true }), t("trash", "Usuń", { dim: true }), t("cut", "Wytnij", { dim: true }), t("copy", "Kopiuj", { dim: true }),
    t("paste", "Wklej", { dim: true }), t("undo", "Cofnij", { dim: true }), t("redo", "Ponów", { dim: true }),
  ],
  [
    t("label", "Etykiety"), t("diagram", "Diagramy"), { sep: true }, t("pinLabel", "Przypnij etykiety"), t("redLabel", "Nieumieszczone etykiety"), { sep: true },
    t("pinDim", "Przypnij", { dim: true }), t("showDim", "Pokaż", { dim: true }), t("moveDim", "Przesuń etykietę", { dim: true }),
    t("rotateDim", "Obróć etykietę", { dim: true }), { more: "wide" },
  ],
  [t("polygon", "Wierzchołki"), { more: "slim" }],
  [t("python", "Konsola Pythona"), { more: "slim" }],
  [t("help", "Pomoc"), { more: "blank" }],
  [t("tableRefresh", "Group Stats")],
];

const ROW3: Tool[][] = [
  [t("select", "Wybierz obiekty", { d: true }), t("selectForm", "Wybierz wartości", { d: true }), t("deselect", "Odznacz", { d: true }), t("selectLoc", "Wybierz przez lokalizację", { d: true })],
  [t("meshEdit", "Edytuj mesh", { dim: true }), t("meshSel", "Zaznacz mesh", { dim: true, d: true }), t("meshTrans", "Przekształć mesh", { dim: true }), t("meshForce", "Wymuś linie", { dim: true, d: true })],
  [
    t("annotLayer", "Warstwa adnotacji", { d: true }), t("annotSel", "Zmień adnotację"), t("annotPoly", "Adnotacja poligonowa"), t("annotLine", "Adnotacja liniowa"),
    t("annotPoint", "Znacznik"), t("annotText", "Adnotacja tekstowa"), t("annotCurve", "Tekst wzdłuż linii"), { sep: true }, t("annotNote", "Notatka", { d: true }),
  ],
  [t("measure", "Plugin")],
];

function Grip() {
  return (
    <div className="grid grid-cols-2 gap-[2px]">
      {Array.from({ length: 12 }, (_, n) => (
        <span key={n} className="size-1 bg-[#848484]" />
      ))}
    </div>
  );
}

function Caret({ className = "" }: { className?: string }) {
  return (
    <svg viewBox="0 0 16 8" aria-hidden="true" className={`h-2 w-4 shrink-0 ${className}`}>
      <path d="M0 0h16L8 8z" fill="currentColor" />
    </svg>
  );
}

const MORE_WIDTH = { wide: "w-[39px]", slim: "w-[27px]", blank: "w-[30px]" };

function ToolButton({ tool }: { tool: Tool }) {
  if (tool.sep) return <span className="mx-[6px] h-10 w-px bg-[#2a2a2a]" />;
  if (tool.more)
    return (
      <span className={`flex h-10 items-center justify-end pr-[3px] text-[24px] text-[#3d3d3d] ${MORE_WIDTH[tool.more]}`}>
        {tool.more === "blank" ? "" : "»"}
      </span>
    );
  return (
    <div className={`flex items-center ${tool.d ? "w-[90px]" : "w-[66px]"}`}>
      <button aria-label={tool.name} className="relative flex w-[66px] shrink-0 items-center justify-center">
        {tool.on && <span className="absolute -inset-y-1.5 inset-x-[3px] rounded-md border-2 border-[#4c4c4c] bg-[#363636] outline-2 outline-[#232323]" />}
        <span className="relative">
          <Ico dim={tool.dim}>{ICONS[tool.i!]}</Ico>
          {tool.i === "edits" && <Caret className="absolute -right-1 bottom-0 scale-75 text-[#b8b8b8]" />}
        </span>
      </button>
      {tool.d && (
        <button aria-label={`${tool.name} menu`} className="flex w-6 items-center pl-[3px]">
          <Caret className="text-[#b4b4b4]" />
        </button>
      )}
    </div>
  );
}

function ToolRow({ groups, height }: { groups: Tool[][]; height: string }) {
  return (
    <div className={`flex items-stretch border-b border-[#747474] ${height}`}>
      {groups.map((g, n) => (
        <div key={n} role="toolbar" className={`flex shrink-0 items-center pr-[7px] ${n ? "border-l border-[#2b2b2b]" : ""}`}>
          <div className={`flex shrink-0 ${n ? "w-6 pl-[9px]" : "w-[23px] pl-2"}`}>
            <Grip />
          </div>
          {g.map((tool, k) => (
            <ToolButton key={k} tool={tool} />
          ))}
        </div>
      ))}
    </div>
  );
}

/* ------------------------------------------------------------ small parts */

function Tri({ dir }: { dir: "up" | "down" | "left" | "right" }) {
  const d = { up: "M0 12h16L8 4z", down: "M0 4h16L8 12z", left: "M12 0v16L4 8z", right: "M4 0v16l8-8z" }[dir];
  return (
    <svg viewBox="0 0 16 16" aria-hidden="true" className="size-4">
      <path d={d} fill="#b8b8b8" />
    </svg>
  );
}

function ScrollBar({ dir, parts }: { dir: "v" | "h"; parts: [number, number, number] }) {
  const v = dir === "v";
  const btn = `flex shrink-0 items-center justify-center border-2 border-[#545454] bg-[#3b3b3b] ${v ? "h-[26px] w-full" : "h-full w-[26px]"}`;
  return (
    <div className={`flex shrink-0 bg-[#363636] outline-1 outline-[#272727] ${v ? "w-[27px] flex-col" : "h-[27px]"}`}>
      <button aria-label="Przewiń wstecz" className={btn}><Tri dir={v ? "up" : "left"} /></button>
      <span className="basis-[2px] bg-[#272727]" style={{ flexGrow: parts[0] }}>
        <span className={`block bg-[#383838] ${parts[0] ? "h-full" : ""}`} />
      </span>
      <span className="border-2 border-[#525252] bg-[#404040]" style={{ flexGrow: parts[1] }} />
      <span className="basis-[2px] bg-[#383838]" style={{ flexGrow: parts[2] }} />
      <button aria-label="Przewiń dalej" className={btn}><Tri dir={v ? "down" : "right"} /></button>
    </div>
  );
}

function DockButtons() {
  return (
    <div className="flex gap-1.5">
      <button aria-label="Oddokuj">
        <svg viewBox="0 0 22 22" className="size-[22px]" fill="none" stroke="#8d8d8d" strokeWidth="1.6">
          <rect x="1" y="1" width="20" height="20" rx="2" />
          <path d="M5 9h8v8H5zM9 9V5h8v8h-4" />
        </svg>
      </button>
      <button aria-label="Zamknij">
        <svg viewBox="0 0 22 22" className="size-[22px]" fill="none" stroke="#8d8d8d" strokeWidth="1.6">
          <rect x="1" y="1" width="20" height="20" rx="2" />
          <path d="M5 5l12 12M17 5L5 17" strokeWidth="3" />
        </svg>
      </button>
    </div>
  );
}

function Check({ id, checked, className = "" }: { id: string; checked?: boolean; className?: string }) {
  return (
    <span className={`relative flex size-7 shrink-0 ${className}`}>
      <input id={id} type="checkbox" defaultChecked={checked} className="peer size-full appearance-none rounded-sm border-2 border-[#262626] bg-[#1b1b1b]" />
      <svg viewBox="0 0 28 28" aria-hidden="true" className="pointer-events-none absolute inset-0 hidden peer-checked:block">
        <path d="M7 13l5 9 9-16" fill="none" stroke="#c4c4c4" strokeWidth="2.8" />
      </svg>
    </span>
  );
}

function Dots({ vertical }: { vertical?: boolean }) {
  return (
    <span className={`flex gap-[2px] ${vertical ? "flex-col" : ""}`}>
      {[0, 1, 2, 3, 4, 5].map((n) => (
        <span key={n} className="size-1 bg-[#7c7c7c]" />
      ))}
    </span>
  );
}

/* ---------------------------------------------------------------- browser */

type Kind = "point" | "line" | "poly";
const TREE: [string, Kind][] = [
  ["airports", "point"], ["alaska", "poly"], ["builtups", "poly"], ["grassland", "poly"], ["lakes", "poly"], ["landice", "poly"],
  ["majrivers", "line"], ["pipelines", "line"], ["popp", "point"], ["railroads", "line"], ["regions", "poly"], ["rivers", "line"],
  ["storagep", "point"], ["swamp", "poly"], ["trails", "line"], ["trees", "poly"], ["tundra", "poly"],
];

function KindIcon({ kind }: { kind: Kind }) {
  return (
    <svg viewBox="0 0 32 32" aria-hidden="true" className="size-8 shrink-0">
      {kind === "poly" && (
        <path d="M1 13C1 4 8 5 12 7q7 2 12 0c5-2 7-2 7 3v6c0 4-2 4-6 4q-7-2-12 1C8 25 1 28 1 20z" fill="#dcdcd8" stroke="#8e8e88" strokeWidth="1.2" />
      )}
      {kind === "line" && <path d="M3 8l8 18L21 4h8" fill="none" stroke="#9a9a94" strokeWidth="1.8" />}
      {(kind === "line" ? [[3, 8], [11, 26], [21, 4], [29, 4]] : kind === "point" ? [[7, 25], [11, 11], [25, 5]] : []).map(([x, y]) => (
        <circle key={x} cx={x} cy={y} r="2.5" fill="#d8d8d0" stroke="#8e8e88" />
      ))}
    </svg>
  );
}

const SERVERS: [string, ReactNode][] = [
  ["SAP HANA", (
    <>
      <rect x="9" y="9" width="30" height="30" fill="#6a9bd0" />
      <path d="M8 3h33M8 45h33" stroke="#54789f" strokeWidth="4" strokeDasharray="4 3" />
      <path d="M3 8v33M45 8v33" stroke="#54789f" strokeWidth="4" strokeDasharray="4 3" />
    </>
  )],
  ["MS SQL Server", (
    <>
      <path d="M1 4q38-2 46 20Q24 26 3 43q14-20-2-39z" fill="#6a9bd0" stroke="#34587f" strokeWidth="1.5" />
      <path d="M14 4q12 16 2 30M24 7q9 12 4 22M34 10q6 8 3 16" stroke="#24405e" strokeWidth="2" fill="none" />
    </>
  )],
  ["Oracle", (
    <>
      <rect x="1" y="9" width="46" height="30" rx="13" fill="#54789f" />
      <rect x="6" y="14" width="36" height="20" rx="9" fill="#6a9bd0" />
    </>
  )],
  ["WMS/WMTS", <GlobeMini key="g" />],
  ["Scenes", (
    <>
      <path d="M24 2l18 9-18 9-18-9z" fill="#a8c4e8" stroke="#3d6ea5" strokeWidth="2" />
      <path d="M6 17l18 9 18-9v10l-18 9-18-9z" fill="#3d6ea5" />
    </>
  )],
];

function Browser() {
  return (
    <section className="flex h-[904px] shrink-0 flex-col pt-[3px]">
      <header className="flex h-9 shrink-0 items-center justify-between pr-[2px] pl-[6px] text-[23px] text-[#dcdcdc]">
        <h2>Przeglądarka</h2>
        <DockButtons />
      </header>
      <div className="flex h-[63px] shrink-0 items-center gap-5 pl-[15px]">
        <button aria-label="Dodaj warstwę">
          <Ico className="size-[30px]">
            <rect x="2" y="4" width="40" height="32" fill="#eeeeec" stroke="#999" strokeWidth="2" />
            <PlusBadge s={20} />
          </Ico>
        </button>
        <button aria-label="Odśwież"><Ico className="size-[30px]"><Refresh /></Ico></button>
        <button aria-label="Filtruj"><Ico className="size-[30px]"><Funnel /></Ico></button>
        <button aria-label="Zwiń wszystko"><Ico className="size-[30px]"><Expand up /></Ico></button>
        <button aria-label="Właściwości">
          <Ico className="size-[30px]">
            <circle cx="24" cy="24" r="21" fill="#6a9bd0" stroke="#4a78ac" strokeWidth="2" />
            <text x="24" y="38" textAnchor="middle" fontFamily="Liberation Serif, serif" fontStyle="italic" fontWeight="700" fontSize="40" fill="#fff">i</text>
          </Ico>
        </button>
      </div>
      <div className="flex min-h-0 flex-1 border-t-2 border-[#292929] bg-[#1e1e1e]">
        <div className="flex min-w-0 flex-1 flex-col">
          <ul className="min-h-0 flex-1 overflow-hidden text-[26px] text-[#dedede]">
            {TREE.map(([name, kind]) => (
              <li key={name} className={`flex h-9 items-center pl-[107px] ${name === "swamp" ? "bg-[#464646] text-white" : ""}`}>
                <svg viewBox="0 0 10 16" aria-hidden="true" className="mr-[17px] h-4 w-[10px]"><path d="M1 0v16l8-8z" fill="#a8a8a8" /></svg>
                <KindIcon kind={kind} />
                <span className="pl-[11px]">{name}</span>
              </li>
            ))}
            {SERVERS.map(([name, icon]) => (
              <li key={name} className="flex h-9 items-center pl-[38px]">
                <Ico className="size-8">{icon}</Ico>
                <span className="pl-[11px]">{name}</span>
              </li>
            ))}
          </ul>
          <ScrollBar dir="h" parts={[0, 333, 6]} />
        </div>
        <div className="flex flex-col bg-[#323232]">
          <div className="flex min-h-0 flex-1"><ScrollBar dir="v" parts={[194, 406, 116]} /></div>
          <div className="h-7" />
        </div>
      </div>
    </section>
  );
}

/* ----------------------------------------------------------------- layers */

function Layers() {
  return (
    <section className="flex min-h-0 flex-1 flex-col">
      <div className="flex h-4 shrink-0 items-center justify-center pl-[6px]"><Dots /></div>
      <header className="flex h-9 shrink-0 items-center justify-between pr-[2px] pl-[6px] text-[23px] text-[#dcdcdc]">
        <h2>Warstwy</h2>
        <DockButtons />
      </header>
      <div className="flex h-[62px] shrink-0 items-center gap-5 pl-[15px]">
        <button aria-label="Stylizacja">
          <Ico className="size-[30px]">
            <path d="M2 40L16 6l14 8-6 22z" fill="#e02828" />
            <path d="M6 28L16 6l18 10-4 10z" fill="#3f74b8" />
            <path d="M11 17l5-11 20 10-3 7z" fill="#fcd840" />
            <path d="M14 30l14-10 12 12-12 14z" fill="#e8c088" stroke="#8a5a20" strokeWidth="1.5" />
            <path d="M30 24L46 6" stroke="#c8821e" strokeWidth="5" strokeLinecap="round" />
          </Ico>
        </button>
        <button aria-label="Dodaj grupę">
          <Ico className="size-[30px]">
            <path d="M2 28v16h18M9 16v22h28V16zM16 8v24h26V8z" fill="none" stroke="#aaa" strokeWidth="3" />
            <path d="M16 9h24v23H16z" fill="#e4e4e4" />
            <path d="M21 16v13h9V5q-4-5-7 0v16" fill="none" stroke="#2b5687" strokeWidth="3" />
            <PlusBadge s={20} />
          </Ico>
        </button>
        <button aria-label="Widoczność" className="relative">
          <Ico className="size-[30px]">
            <path d="M2 24Q24 4 46 24 24 46 2 24z" fill="#f2f2ee" stroke="#777" strokeWidth="1.5" />
            <circle cx="24" cy="24" r="12" fill="#5f8fc4" stroke="#2b5687" strokeWidth="1.5" />
            <circle cx="24" cy="24" r="5" fill="#0a0a0a" />
            <path d="M1 14Q22 0 44 14" fill="none" stroke="#888" strokeWidth="2" />
          </Ico>
          <Caret className="absolute -right-1.5 -bottom-[2px] scale-75 text-[#b8b8b8]" />
        </button>
        <button aria-label="Filtruj" className="relative">
          <Ico className="size-[30px]"><Funnel /></Ico>
          <Caret className="absolute -right-1.5 -bottom-[2px] scale-75 text-[#b8b8b8]" />
        </button>
        <div className="flex w-[54px] items-center gap-3">
          <button aria-label="Filtr wyrażenia">
            <Ico className="size-[30px]">
              <text x="12" y="28" textAnchor="middle" fontFamily="Liberation Serif, serif" fontSize="56" fill="#6e3678">ε</text>
              <rect x="24" y="26" width="22" height="21" rx="3" fill="#9a9a96" />
              <path d="M27 29h16l-6 8v9h-4v-9z" fill="#f2f2f2" />
            </Ico>
          </button>
          <Caret className="text-[#b4b4b4]" />
        </div>
        <button aria-label="Rozwiń wszystko"><Ico className="size-[30px]"><Expand /></Ico></button>
        <button aria-label="Zwiń wszystko"><Ico className="size-[30px]"><Expand up /></Ico></button>
      </div>
      <div className="flex min-h-0 flex-1 flex-col border-t-2 border-[#292929] bg-[#1e1e1e]">
        <ul className="min-h-0 flex-1 overflow-hidden text-[26px] font-bold text-[#dedede]">
          <li className="relative flex h-9 items-center bg-[#464646] pl-[46px] text-white">
            <Check id="layer-1" checked />
            <span className="ml-[13px] size-[31px] shrink-0 border border-[#232323] bg-[#e15989]" />
            <label htmlFor="layer-1" className="ml-3 whitespace-nowrap underline decoration-2 underline-offset-4">Uproszczona geometria</label>
            <MemoryBadge dark />
          </li>
          <li className="relative flex h-9 items-center pl-[46px]">
            <Check id="layer-2" checked />
            <span className="mr-[8px] ml-[19px] size-[17px] rounded-full bg-[#c43c39]" />
            <label htmlFor="layer-2" className="ml-3">Wierzchołki</label>
            <MemoryBadge />
          </li>
          <li className="flex h-9 items-center pl-[46px]">
            <Check id="layer-3" checked />
            <span className="ml-[13px] size-[31px] border border-[#3a4648] bg-[#7d8b8f]" />
            <label htmlFor="layer-3" className="ml-3">swamp</label>
          </li>
        </ul>
        <ScrollBar dir="h" parts={[0, 347, 21]} />
      </div>
    </section>
  );
}

function MemoryBadge({ dark }: { dark?: boolean }) {
  return (
    <span className={`absolute top-[2px] right-[10px] flex size-8 items-center justify-center rounded ${dark ? "bg-[#202020]" : "bg-[#242424]"}`}>
      <svg viewBox="0 0 24 24" aria-hidden="true" className="size-6">
        <path d="M2 16V7h20v9" fill="none" stroke="#484848" strokeWidth="2" />
        <path d="M5 2v3M9 2v3M13 2v3M17 2v3M5 18v3M9 18v3M13 18v3M17 18v3" stroke="#303030" strokeWidth="1.5" />
      </svg>
    </span>
  );
}

/* -------------------------------------------------------------------- map */

type Pt = [number, number];
type Sheet = { ox: number; oy: number; sx: number; sy: number; trails: string[]; areas: string[]; base: string[]; specks: string };

/* Digitised sheets: each has its own origin and scale on the canvas */
const NORTH: Sheet = {
  ox: 60, oy: 148, sx: 1.6165, sy: 2.6133,
  base: ["1150,130 1190,130 1190,290 1160,290 1140,200", "1400,225 1455,210 1455,255 1400,260"],
  trails: [
    "1066,320 1062,285 1085,250 1088,185 1100,182 1125,190 1120,230 1122,262 1100,322 1066,320", "1085,240 1098,190 1118,205 1105,240",
    "1165,118 1143,138 1130,180 1128,240 1140,275 1160,288 1182,292 1192,268 1175,258 1140,248 1180,240 1186,200 1196,185 1195,122 1178,145 1170,115",
    "1145,160 1150,200 1135,260 1150,235 1170,245", "1226,245 1240,245 1262,252 1264,290 1255,322 1235,300 1221,290 1226,245",
    "1378,280 1380,240 1388,210 1408,218 1425,160 1462,165 1450,200 1462,250 1430,255 1390,262 1420,230 1445,215",
    "1498,310 1512,345 1508,378 1480,370 1498,310", "1465,400 1472,435 1480,385 1505,440 1520,500 1542,552 1560,555", "1530,435 1548,465 1556,500",
    "1562,280 1562,298",
    "285,800 292,755 310,740 330,715 350,705 370,700 400,708 420,705 437,730 435,750 425,775 428,825 418,865 422,910 415,945 432,985 405,1000 398,1010 390,1045",
    "225,852 222,880 228,900 205,925 215,905 224,870", "188,845 200,845 207,880 200,915 182,910 188,845",
    "116,905 132,897 150,915 164,925 158,950 140,970 120,985 105,985 112,940 116,905", "60,968 85,950 100,960 98,990 70,1006 60,985 60,968",
    "374,1132 390,1140 393,1175 388,1210 372,1218 366,1190 358,1165 374,1132", "538,1256 548,1250 578,1252 576,1268 545,1264 538,1256",
    "470,1345 470,1380 476,1390 465,1425 459,1390 459,1370 470,1345", "782,1010 780,1050 762,1070 754,1060 762,1038 782,1010",
    "898,1015 902,1030 900,1100 892,1145 870,1160 858,1150", "835,1195 824,1225 840,1250 855,1300 867,1355 868,1340 885,1280 882,1240 865,1230",
    "1348,1020 1350,990 1375,960 1410,928 1445,912 1452,934 1420,975 1422,1000 1415,970 1368,1018 1348,1020",
    "1352,1163 1365,1165 1397,1162 1380,1190 1378,1212 1362,1220 1356,1190 1352,1163",
    "1432,1357 1450,1325 1465,1310 1475,1335 1502,1312 1502,1345 1493,1385 1490,1355 1435,1357",
  ],
  areas: [
    "1164,112 1130,195 1171,228", "1060,305 1107,320 1133,168", "1224,248 1240,245 1262,250 1256,328 1222,295", "1425,157 1460,160 1386,272",
    "1498,310 1513,370 1480,368", "1481,395 1541,435 1575,530 1575,555 1542,558", "335,711 419,706 421,800 390,1053 204,920 285,785",
    "185,846 192,840 203,850 198,922 181,908", "114,902 164,925 165,945 116,990", "59,965 98,950 94,990 65,1010", "359,1152 389,1135 387,1218 365,1222",
    "536,1252 545,1245 583,1256 578,1272", "466,1342 471,1345 463,1415 458,1382", "780,1010 781,1052 762,1077 753,1050", "896,1020 898,1100 890,1152 856,1152",
    "839,1190 886,1262 867,1358 822,1225", "1413,925 1455,934 1348,1025 1350,985", "1353,1157 1397,1160 1375,1220 1363,1222", "1502,1312 1499,1348 1435,1357",
  ],
  specks:
    "349,724 366,720 376,728 398,723 391,745 335,760 336,768 361,758 362,768 381,762 381,772 349,790 299,780 338,838 357,877 360,885 380,885 381,897 392,880 373,917 387,927 255,912 1232,258 1250,286 1250,292 124,960 124,967 870,1280 870,1287 1543,526 1527,475 1525,488 1360,1185 1361,1200 1157,168 1135,178 1425,935 363,1168 461,1385 190,855 418,769",
};

const SOUTH: Sheet = {
  ox: 360, oy: 908, sx: 2.24, sy: 2.45,
  base: ["915,390 960,385 950,420 920,430"],
  trails: [
    "122,468 150,472 158,490 180,545 195,575 160,565 125,556 120,530 116,495 122,468", "185,600 192,640 175,665 163,685 160,650 172,612",
    "228,580 245,602 240,640 242,655 230,665 215,620 200,595", "912,354 915,380 908,410 900,440 895,447 925,440 945,430 960,405 992,388 990,380 945,376 922,385",
    "770,510 780,512 805,503 825,508 822,535 808,555 785,540 770,528 770,510", "930,622 950,618 968,622 962,650 955,672 938,675 930,655 930,622",
    "1350,140 1370,135 1373,155 1378,180 1360,188 1350,165 1350,140", "1216,728 1238,728 1245,760 1254,782 1220,758 1212,745 1216,728",
    "1283,805 1290,825 1304,832 1300,865 1265,862 1262,875 1265,905", "1322,885 1325,915 1325,960 1318,970 1295,955 1292,925 1322,885",
    "1200,1025 1240,1020 1270,1000 1304,985 1275,1030 1262,1048 1240,1050 1200,1025", "1322,1035 1322,1088 1300,1080 1300,1045 1322,1035",
    "362,1055 395,1070 392,1095 384,1128 370,1110 363,1085 362,1055", "335,1125 360,1120 348,1155 342,1180 318,1175 332,1145 335,1125",
    "685,1085 692,1110 680,1145 668,1200 640,1205 595,1212 585,1185 605,1160 630,1150 655,1110 685,1085",
    "1145,1250 1165,1240 1212,1240 1205,1255 1175,1265 1143,1288 1134,1270 1145,1250",
    "1000,1300 1015,1315 1068,1322 1072,1345 1065,1362 1018,1370 1008,1345 1000,1300",
    "1248,1310 1250,1285 1290,1258 1340,1228 1380,1220 1418,1215 1418,1230", "1248,1325 1275,1350 1300,1370 1330,1375 1335,1398 1300,1395 1290,1375 1350,1380 1385,1395",
    "1228,1362 1192,1368 1175,1410 1180,1430 1210,1445 1228,1466 1232,1420 1228,1362", "1252,1382 1278,1372 1295,1400 1260,1440 1245,1445 1250,1400",
  ],
  areas: [
    "156,470 195,582 120,556 115,508", "190,598 188,640 165,685 168,630", "228,578 232,662 204,602", "955,405 998,375 994,392", "903,447 944,415 944,440",
    "768,510 827,510 808,557 770,528", "930,622 969,620 956,674 928,655", "1350,145 1370,130 1380,182 1358,192", "1222,722 1240,725 1252,785 1212,755",
    "1289,805 1303,868 1268,873", "1320,880 1327,952 1293,958 1286,915", "1296,990 1262,1050 1228,1048 1201,1022", "1322,1030 1318,1088 1298,1072 1297,1045",
    "361,1056 398,1068 384,1126 361,1086", "368,1113 347,1185 322,1175 331,1122", "683,1085 668,1200 595,1212 586,1188", "1153,1238 1210,1240 1143,1292 1134,1270",
    "1000,1315 1067,1318 1067,1366 1013,1373", "1292,1253 1420,1215 1385,1397 1249,1308", "1228,1362 1230,1465 1175,1412", "1250,1385 1278,1378 1284,1410 1242,1445",
  ],
  specks: "805,528 807,535 664,1133 664,1140 1357,1311 1265,1390 1265,1397 1188,1413 1190,1420 1292,832 1299,910",
};

function place(s: Sheet, list: string): Pt[] {
  return list.split(" ").map((p) => {
    const [x, y] = p.split(",").map(Number);
    return [s.ox + x / s.sx, s.oy + y / s.sy];
  });
}

function markers(pts: Pt[]): Pt[] {
  const out: Pt[] = [];
  let k = 0;
  for (let n = 0; n + 1 < pts.length; n++) {
    const [ax, ay] = pts[n];
    const [bx, by] = pts[n + 1];
    const len = Math.hypot(bx - ax, by - ay);
    const steps = Math.max(1, Math.round(len / 4));
    for (let m = 0; m < steps; m++, k++) {
      const w = 1.5 * Math.sin(k * 1.3 + n);
      out.push([ax + ((bx - ax) * m) / steps + w, ay + ((by - ay) * m) / steps + 1.5 * Math.cos(k * 0.9)]);
    }
  }
  out.push(pts[pts.length - 1]);
  return out;
}

const join = (p: Pt[]) => p.map(([x, y]) => `${x.toFixed(1)},${y.toFixed(1)}`).join(" ");

function MapCanvas() {
  return (
    <svg viewBox="0 0 1902 1736" preserveAspectRatio="xMinYMin slice" role="img" aria-label="Mapa" className="absolute inset-0 size-full">
      {[NORTH, SOUTH].map((s, n) => (
        <g key={n}>
          {s.base.map((a) => <polygon key={a} points={join(place(s, a))} fill="#7d8b8f" />)}
          <g fill="#c43c39" stroke="#232323" strokeWidth="1.3">
            {s.trails.flatMap((tr, q) => markers(place(s, tr)).map(([x, y], m) => <circle key={`${q}-${m}`} cx={x.toFixed(1)} cy={y.toFixed(1)} r="7.5" />))}
          </g>
          {s.areas.map((a) => <polygon key={a} points={join(place(s, a))} fill="#e15989" stroke="#232323" strokeWidth="2" strokeLinejoin="round" />)}
          {place(s, s.specks).map(([x, y], m) => <rect key={m} x={x - 1.5} y={y - 1.5} width="3.5" height="3.5" fill="#232323" />)}
        </g>
      ))}
    </svg>
  );
}

/* ------------------------------------------------------------- status bar */

function Spin({ id, value, width }: { id: string; value: string; width: string }) {
  return (
    <span className={`flex h-11 overflow-hidden rounded-sm border-2 border-[#262626] bg-[#1b1b1b] ${width}`}>
      <input id={id} defaultValue={value} className="min-w-0 flex-1 bg-transparent pl-2 text-[#e0e0e0]" />
      <span className="flex w-[28px] flex-col items-center justify-center border-2 border-[#525252] bg-[#3d3d3d]">
        <button aria-label="Zwiększ"><Tri dir="up" /></button>
        <button aria-label="Zmniejsz"><Tri dir="down" /></button>
      </span>
    </span>
  );
}

function StatusBar() {
  return (
    <footer className="flex h-[60px] shrink-0 items-center bg-[#303030] pt-[3px] pl-[7px] text-[22px] text-[#dcdcdc]">
      <label className="flex h-[47px] w-[422px] items-center gap-3.5 rounded-md border-2 border-[#292929] bg-[#1b1b1b] pl-[15px]">
        <svg viewBox="0 0 26 26" aria-hidden="true" className="size-[26px]" fill="none" stroke="#8a8a8a" strokeWidth="2">
          <circle cx="11" cy="10" r="8" />
          <path d="M17 16l8 9" />
        </svg>
        <input aria-label="Szukana fraza" placeholder="Szukana fraza (⌘K)" className="w-80 bg-transparent text-[25px] placeholder:text-[#8a8a8a]" />
      </label>
      <div className="ml-auto flex items-center">
        <label htmlFor="coords" className="text-[23px]">Współrzędne</label>
        <input id="coords" defaultValue="698426  3913656" className="ml-2 h-11 w-[236px] rounded-md border-2 border-[#282828] bg-[#1b1b1b] pl-[16px] text-[23px] whitespace-pre" />
        <button aria-label="Zasięg" className="ml-2">
          <svg viewBox="0 0 32 32" className="size-8" aria-hidden="true">
            <g transform="rotate(-28 16 16)" fill="#fff" stroke="#111" strokeWidth="1.5">
              <rect x="8" y="1" width="11" height="17" rx="5" />
              <rect x="13" y="13" width="11" height="17" rx="5" />
              <path d="M13 3v9M16 3v9M18 20v5" strokeWidth="2" />
            </g>
            <path d="M24 9l3-3M27 11h3M3 20l-2 3" stroke="#111" strokeWidth="2" />
          </svg>
        </button>
        <label htmlFor="scale" className="ml-[26px] text-[23px] font-medium">Skala</label>
        <span className="relative ml-2 flex h-[47px] w-[186px] rounded-md border-2 border-[#282828] bg-[#1b1b1b]">
          <select id="scale" className="w-full appearance-none bg-transparent pl-[6px]">
            <option>1:3806129</option>
          </select>
          <span className="pointer-events-none absolute inset-y-0 right-0 flex w-10 items-center justify-center rounded-r border-2 border-[#525252] bg-[#424242]">
            <Caret className="text-[#1b1b1b]" />
          </span>
        </span>
        <svg viewBox="0 0 26 34" aria-hidden="true" className="ml-[22px] h-[32px] w-[24px]">
          <path d="M5 15V10a8 8 0 0 1 16 0v5" fill="none" stroke="#9c9c9c" strokeWidth="3" />
          <rect x="0" y="14" width="26" height="20" rx="2" fill="#6c6c6c" />
        </svg>
        <label htmlFor="zoom" className="ml-4 text-[23px] font-medium">Powiększenie</label>
        <span className="ml-2"><Spin id="zoom" value="100%" width="w-[184px]" /></span>
        <label htmlFor="rot" className="ml-5">Obrót</label>
        <span className="ml-[18px]"><Spin id="rot" value="0,0 °" width="w-[186px]" /></span>
        <Check id="render" checked className="ml-3" />
        <label htmlFor="render" className="ml-[10px]">Renderuj</label>
        <button className="ml-8 flex items-center gap-[6px] text-black">
          <svg viewBox="0 0 30 30" aria-hidden="true" className="size-7" fill="none" stroke="#9c9c9c" strokeWidth="2">
            <circle cx="15" cy="15" r="12" />
            <ellipse cx="15" cy="15" rx="6" ry="12" />
            <path d="M15 3v24M1 15h28M5 8h20M5 22h20" />
          </svg>
          EPSG:2964
        </button>
        <button aria-label="Komunikaty" className="mr-7 ml-[49px]">
          <svg viewBox="0 0 32 32" aria-hidden="true" className="size-8">
            <circle cx="16" cy="15" r="14" fill="#777" />
            <path d="M18 26l11 5-6-10z" fill="#777" />
            <path d="M8 15h3M14 15h3M20 15h3" stroke="#fff" strokeWidth="3" />
          </svg>
        </button>
        <Resize />
      </div>
    </footer>
  );
}

function Resize() {
  return (
    <svg viewBox="0 0 24 24" aria-hidden="true" className="size-6 self-end">
      <path d="M20 0h4v4h-4zM14 6h4v4h-4zM20 6h4v4h-4zM8 12h4v4H8zM14 12h4v4h-4zM20 12h4v4h-4zM2 18h4v4H2zM8 18h4v4H8zM14 18h4v4h-4zM20 18h2v3h-2z" fill="#8a8a8a" />
    </svg>
  );
}

/* ----------------------------------------------------------------- dialog */

const BARS = (
  <svg viewBox="0 0 42 42" aria-hidden="true" className="size-[42px] shrink-0">
    <defs>
      <linearGradient id="bar-o" x2="0" y2="1"><stop stopColor="#f78a2a" /><stop offset="1" stopColor="#c83808" /></linearGradient>
      <linearGradient id="bar-b" x2="0" y2="1"><stop stopColor="#2cc0f0" /><stop offset="1" stopColor="#0d6080" /></linearGradient>
      <linearGradient id="bar-g" x2="0" y2="1"><stop stopColor="#a0cc60" /><stop offset="1" stopColor="#4a7408" /></linearGradient>
    </defs>
    <rect x="2" y="23" width="12" height="16" rx="2" fill="url(#bar-o)" />
    <rect x="15" y="11" width="11" height="28" rx="2" fill="url(#bar-b)" />
    <rect x="28" y="0" width="11" height="39" rx="2" fill="url(#bar-g)" />
    <rect x="0" y="39" width="42" height="3" fill="#f4f4f4" />
  </svg>
);

const EARTH = (
  <svg viewBox="0 0 42 42" aria-hidden="true" className="size-[42px] shrink-0">
    <defs><linearGradient id="sea" x2="0" y2="1"><stop stopColor="#38c4ec" /><stop offset="1" stopColor="#0c5878" /></linearGradient></defs>
    <circle cx="21" cy="21" r="20.5" fill="url(#sea)" />
    <path d="M4 11Q10 2 21 1l9 3 5 4-6 1-3-3-5 2 4 3-5 6-6 1 3 4 5 3-3 1-8-6-3-5zM24 22l7-1 6 5-2 6-7 8-3-1 1-7-4-6zM39 16l2 4-1 4-3-3z" fill="#7cac38" stroke="#4e7c14" />
  </svg>
);

const PIE = (
  <svg viewBox="0 0 42 42" aria-hidden="true" className="size-[42px] shrink-0">
    <defs><linearGradient id="pie-y" x2="0" y2="1"><stop stopColor="#fcd040" /><stop offset="1" stopColor="#f88808" /></linearGradient></defs>
    <path d="M21 21V0a21 21 0 0 0-19 29z" fill="#22a4d4" />
    <path d="M21 21L2 29a21 21 0 0 0 19 13z" fill="#6a9a28" />
    <path d="M21 0a21 21 0 0 1 0 42z" fill="url(#pie-y)" />
  </svg>
);

const FIELDS = ["Perimeter", "average", "count", "max", "median", "min", "stand.dev.", "sum", "unique", "variance"];
const PUSH = "rounded-md border-2 border-[#575757] bg-linear-to-b from-[#484848] to-[#3a3a3a] text-black outline-2 outline-[#262626]";
const WELL = "border-2 border-[#2a2a2a] bg-[#1e1e1e]";

function FieldRow({ icon, name, on }: { icon: ReactNode; name: string; on?: boolean }) {
  return (
    <li className={`flex h-[52px] items-center gap-[15px] pl-[9px] text-[24px] ${on ? "bg-[#464646] text-white" : ""}`}>
      {icon}
      <span>{name}</span>
    </li>
  );
}

function GroupStats() {
  return (
    <div role="dialog" aria-labelledby="gs-title" className="absolute top-[209px] right-[3px] flex h-[1420px] w-[1523px] flex-col overflow-hidden rounded-[22px] border-2 border-[#6a6a6a] bg-[#323232] text-[25px] text-[#dedede] shadow-[0_36px_70px_8px_rgba(0,0,0,0.75)] outline-1 outline-black">
      <header className="relative flex h-[54px] shrink-0 items-center justify-center border-b-2 border-black bg-[#3a3a38]">
        <div className="absolute left-[14px] flex gap-4">
          <button aria-label="Zamknij okno" className="size-6 rounded-full bg-[#ed6a5e]" />
          <button aria-label="Minimalizuj" className="size-6 rounded-full bg-[#f5bf4f]" />
          <button aria-label="Powiększ okno" className="size-6 rounded-full bg-[#61c554]" />
        </div>
        <h2 id="gs-title" className="text-[26px] font-bold text-[#b6b6b4]">Group Stats</h2>
      </header>
      <div className="flex min-h-0 flex-1">
        <div className="flex min-w-0 flex-1 flex-col pt-[18px] pl-[17px]">
          <div className="min-h-0 flex-1 border border-[#282828] bg-linear-to-r from-[#303030] from-[24px] to-[#1e1e1e] to-[24px]">
            <div className="h-[34px] bg-[#313131]">
              <table className="table-fixed border-separate border-spacing-0 bg-[#3a3a3a]">
                <colgroup>
                  <col className="w-6" />
                  <col className="w-[57px]" />
                  <col className="w-[119px]" />
                </colgroup>
                <thead className="text-[21px] text-black">
                  <tr className="h-[34px]">
                    <td className="border-r border-[#2a2a2a]" />
                    <th scope="col" className="border-r-2 border-[#2a2a2a] bg-[#444]">
                      <span className="flex items-center justify-end gap-2 pr-1 font-medium">1<Caret className="text-[#b8b8b8]" /></span>
                    </th>
                    <th scope="col" className="border-r border-[#2a2a2a] bg-[#404040] font-medium">2</th>
                  </tr>
                </thead>
                <tbody>
                  <tr className="h-[60px]">
                    <th scope="row" className="border-b border-[#222] text-[21px] font-medium text-black">1</th>
                    <td className="border-r-2 border-b-2 border-[#2a2224] bg-[#f5eaea]" />
                    <td className="border-b-2 border-[#2a2224] bg-[#f5eaea]" />
                  </tr>
                  <tr className="h-[60px]">
                    <th scope="row" className="border-b border-[#222] text-[21px] font-medium text-black">2</th>
                    <td className="border-r border-[#2a2224] bg-[#f5eaea]" />
                    <td className="border-b border-[#2c2c2c] bg-[#1e1e1e] pr-1 text-right text-[26px] tabular-nums">24719,8</td>
                  </tr>
                </tbody>
              </table>
            </div>
          </div>
        </div>
        <div className="flex w-[37px] shrink-0 items-center justify-center pt-[18px] pl-4">
          <Dots vertical />
        </div>
        <section className="flex w-[596px] shrink-0 flex-col">
          <header className="flex h-[41px] items-center justify-between pr-[3px] text-[22px]">
            <h3>Control panel</h3>
            <DockButtons />
          </header>
          <div className="flex flex-col pr-[18px] pl-[11px]">
            <label htmlFor="layers" className="mt-[14px] h-10 leading-[40px]">Layers</label>
            <span className="relative mt-2 flex h-[46px]">
              <select id="layers" className={`w-full appearance-none pl-[9px] text-[26px] ${PUSH}`}>
                <option>Uproszczona geometria</option>
              </select>
              <Caret className="absolute top-5 right-3 text-[#1c1c1c]" />
            </span>
            <h4 className="mt-[10px] h-10 leading-[40px]">Fields</h4>
            <div className={`mt-[7px] flex h-[567px] ${WELL}`}>
              <ul className="min-w-0 flex-1">
                {FIELDS.map((f) => (
                  <FieldRow key={f} name={f} icon={f === "Perimeter" ? EARTH : BARS} on={f === "sum"} />
                ))}
              </ul>
              <ScrollBar dir="v" parts={[190, 316, 1]} />
            </div>
            <div className="mt-[14px] grid grid-cols-[220px_1fr] gap-x-3">
              <div className="flex h-9 items-center"><button className={`h-9 w-[76px] text-[20px] ${PUSH}`}>Filter</button></div>
              <h4 className="leading-[36px]">Columns</h4>
              <div className={`mt-[13px] h-[138px] ${WELL}`} />
              <div className={`mt-[13px] h-[138px] ${WELL}`} />
              <h4 className="mt-[18px] h-10 leading-[40px]">Rows</h4>
              <div className="mt-[18px] flex h-10 items-center">
                <h4>Value</h4>
                <Check id="nulls" className="ml-[14px]" />
                <label htmlFor="nulls" className="ml-[10px] whitespace-nowrap">use NULL values</label>
              </div>
              <div className={`mt-3 h-[138px] ${WELL}`} />
              <ul className={`mt-3 h-[138px] ${WELL}`}>
                <FieldRow name="sum" icon={BARS} />
                <FieldRow name="areakm2" icon={PIE} />
              </ul>
            </div>
            <div className="mt-[15px] flex h-[46px] items-center">
              <Check id="only" />
              <label htmlFor="only" className="ml-[10px]">Use only selected features</label>
              <button className={`ml-auto h-[46px] w-[157px] ${PUSH}`}>Clear</button>
            </div>
            <button className={`mt-[14px] h-[46px] ${PUSH}`}>Calculate</button>
          </div>
        </section>
      </div>
      <footer className="flex h-[62px] shrink-0 items-center justify-between pl-[10px]">
        <p className="pt-[20px] whitespace-pre">{"Calculate...100% |  generate view...100% |  done."}</p>
        <Resize />
      </footer>
    </div>
  );
}

/* -------------------------------------------------------------------- app */

export default function App() {
  return (
    <div className="h-screen min-h-[1700px] overflow-hidden bg-[#14140f] font-['Inter',sans-serif]">
      <div className="relative flex h-full flex-col overflow-hidden rounded-[20px] border-t-2 border-[#6c6c6c] bg-[#323232]">
        <header className="relative flex h-[54px] shrink-0 items-center justify-center border-b-2 border-black bg-[#2c2b29]">
          <div className="absolute left-[14px] flex gap-4">
            <button aria-label="Zamknij okno" className="size-6 rounded-full bg-[#51504e]" />
            <button aria-label="Minimalizuj" className="size-6 rounded-full bg-[#51504e]" />
            <button aria-label="Powiększ okno" className="size-6 rounded-full bg-[#51504e]" />
          </div>
          <h1 className="text-[26px] font-bold text-[#6f6e6c]">*Projekt bez nazwy — QGIS</h1>
        </header>
        <nav className="shrink-0">
          <ToolRow groups={ROW1} height="h-[78px]" />
          <ToolRow groups={ROW2} height="h-[78px]" />
          <ToolRow groups={ROW3} height="h-[76px]" />
        </nav>
        <main className="flex min-h-0 flex-1">
          <aside className="flex w-[424px] shrink-0 flex-col">
            <Browser />
            <Layers />
          </aside>
          <div className="flex w-4 shrink-0 items-center justify-center pt-[10px] pl-1"><Dots vertical /></div>
          <div className="relative mt-1 min-w-0 flex-1 overflow-hidden bg-white">
            <MapCanvas />
          </div>
          <div className="w-4 shrink-0" />
          <aside className="w-[632px] shrink-0 bg-[#1e1e1e]" />
        </main>
        <StatusBar />
        <GroupStats />
      </div>
    </div>
  );
}
